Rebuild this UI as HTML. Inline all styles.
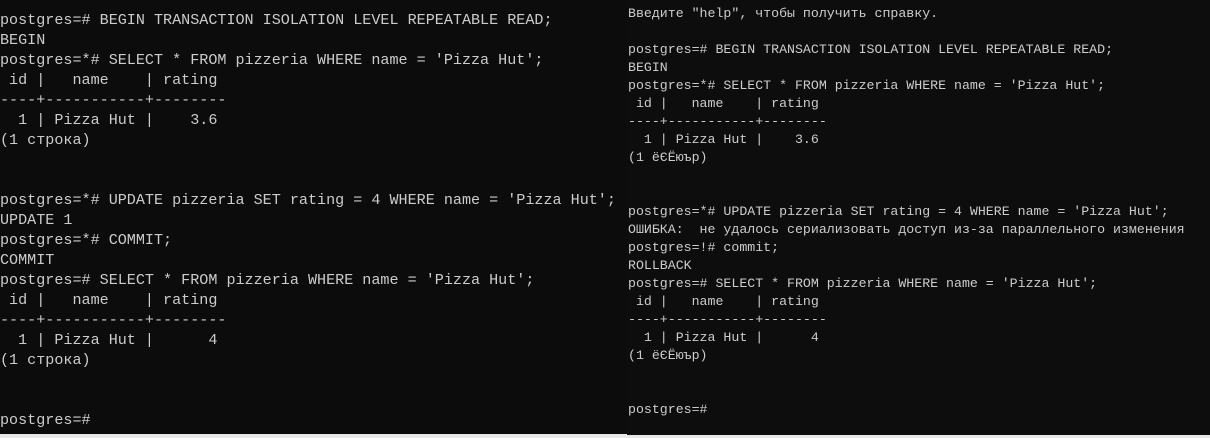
<!DOCTYPE html>
<html><head><meta charset="utf-8"><style>
html,body{margin:0;padding:0;width:1210px;height:438px;overflow:hidden;background:#e8e8e8;}
.p{position:absolute;background:#0c0c0c;overflow:hidden;}
pre{margin:0;position:absolute;color:#cccccc;font-family:"Liberation Mono","DejaVu Sans Mono",monospace;}
#l{left:0;top:0;width:627px;height:434px;}
#r{left:627px;top:0;width:583px;height:435px;background:#0d0d0d;}
#l pre{left:0;top:10px;font-size:15.1px;line-height:20px;}
#r pre{left:1px;top:-13px;font-size:13.25px;line-height:18px;}
</style></head><body>
<div class="p" id="l"><pre>postgres=# BEGIN TRANSACTION ISOLATION LEVEL REPEATABLE READ;
BEGIN
postgres=*# SELECT * FROM pizzeria WHERE name = 'Pizza Hut';
 id |   name    | rating
----+-----------+--------
  1 | Pizza Hut |    3.6
(1 строка)


postgres=*# UPDATE pizzeria SET rating = 4 WHERE name = 'Pizza Hut';
UPDATE 1
postgres=*# COMMIT;
COMMIT
postgres=# SELECT * FROM pizzeria WHERE name = 'Pizza Hut';
 id |   name    | rating
----+-----------+--------
  1 | Pizza Hut |      4
(1 строка)


postgres=#</pre></div>
<div class="p" id="r"><pre>               Notes for Windows users".
Введите "help", чтобы получить справку.

postgres=# BEGIN TRANSACTION ISOLATION LEVEL REPEATABLE READ;
BEGIN
postgres=*# SELECT * FROM pizzeria WHERE name = 'Pizza Hut';
 id |   name    | rating
----+-----------+--------
  1 | Pizza Hut |    3.6
(1 ёЄЁюър)


postgres=*# UPDATE pizzeria SET rating = 4 WHERE name = 'Pizza Hut';
ОШИБКА:  не удалось сериализовать доступ из-за параллельного изменения
postgres=!# commit;
ROLLBACK
postgres=# SELECT * FROM pizzeria WHERE name = 'Pizza Hut';
 id |   name    | rating
----+-----------+--------
  1 | Pizza Hut |      4
(1 ёЄЁюър)


postgres=#</pre></div>
</body></html>
